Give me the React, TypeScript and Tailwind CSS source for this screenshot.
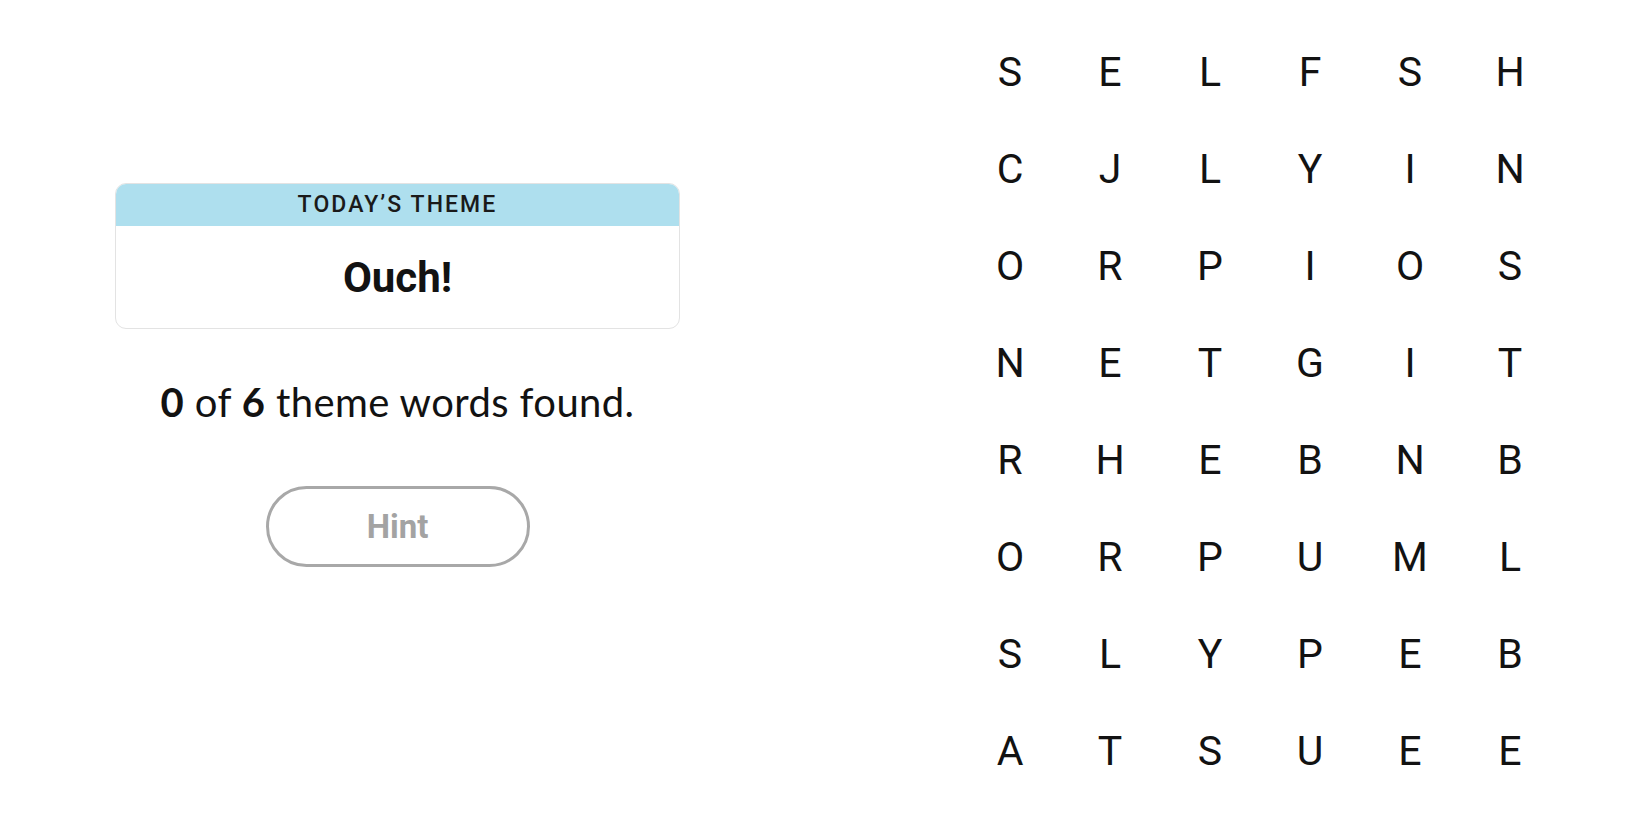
const GRID = [
  "SELFSH",
  "CJLYIN",
  "ORPIOS",
  "NETGIT",
  "RHEBNB",
  "ORPUML",
  "SLYPEB",
  "ATSUEE",
];

export default function App() {
  return (
    <div className="w-[1650px] h-[825px] bg-white flex items-start overflow-hidden">
      <div className="w-[565px] ml-[115px] pt-[183px] flex flex-col items-center">
        <div className="w-full rounded-[11px] border border-[#e3e3e3] overflow-hidden">
          <div className="h-[42px] bg-[#aedfee] flex items-center justify-center text-[23px] font-medium tracking-[0.09em] text-[#1a1a1a] font-['Roboto',sans-serif]">
            TODAY’S THEME
          </div>
          <div className="h-[102px] flex items-center justify-center text-[42px] font-bold text-[#121212] font-['Roboto',sans-serif]">
            Ouch!
          </div>
        </div>
        <p className="mt-[49px] text-[40px] leading-[48px] tracking-[0.01em] text-[#121212] font-['Lato',sans-serif]">
          <b>0</b> of <b>6</b> theme words found.
        </p>
        <button className="mt-[60px] w-[264px] h-[81px] rounded-full border-[3px] border-[#a8a8a8] text-[33px] font-bold text-[#a3a3a3] font-['Roboto',sans-serif]">
          Hint
        </button>
      </div>
      <div className="ml-[280px] pt-[24px] grid grid-cols-6 content-start">
        {GRID.flatMap((row, r) =>
          row.split("").map((ch, c) => (
            <div
              key={`${r}-${c}`}
              className="w-[100px] h-[97px] flex items-center justify-center text-[41px] text-[#121212] font-['Roboto',sans-serif]"
            >
              {ch}
            </div>
          ))
        )}
      </div>
    </div>
  );
}
